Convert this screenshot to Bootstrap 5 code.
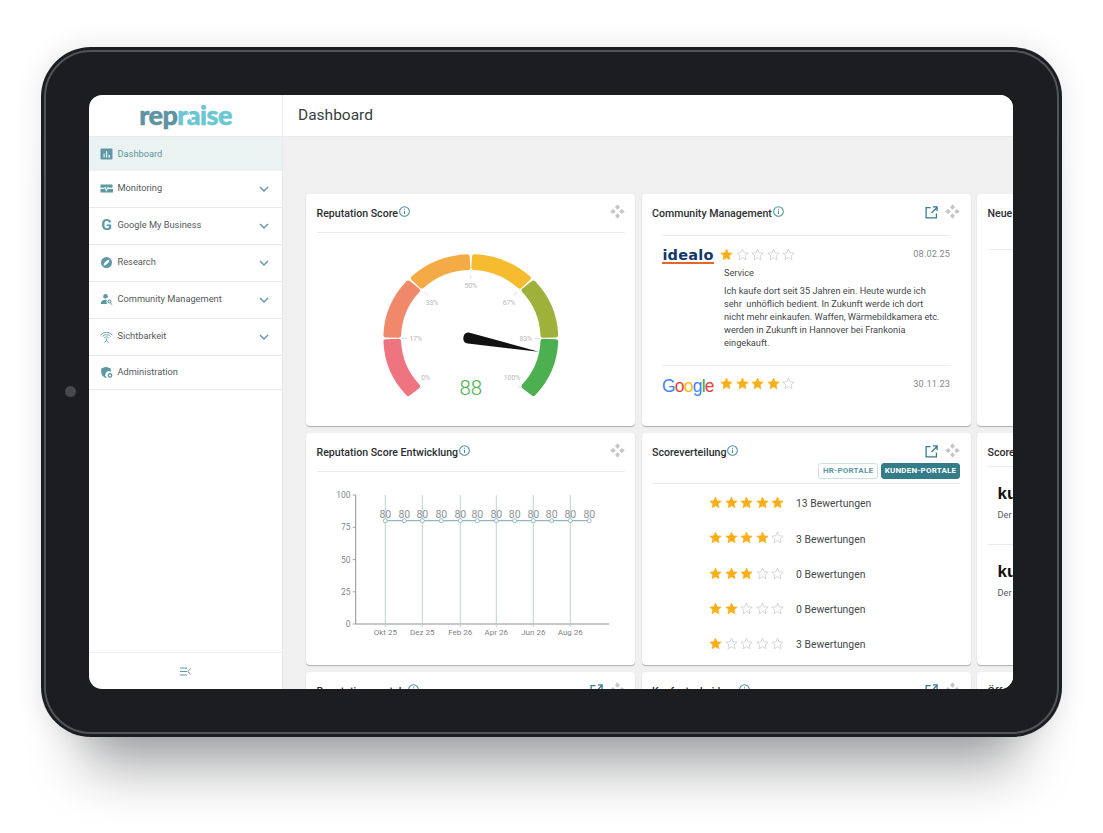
<!DOCTYPE html>
<html lang="de">
<head>
    <meta charset="UTF-8">
    <meta name="viewport" content="width=device-width, initial-scale=1.0">
    <title>Repraise Dashboard</title>
    <link href="https://cdn.jsdelivr.net/npm/bootstrap@5.3.0/dist/css/bootstrap.min.css" rel="stylesheet">
    <style>
        html, body { height: 100%; }
        body { background: #fff; font-family: Roboto, "Liberation Sans", sans-serif; overflow: hidden; color: #3c3f42; }

        /* tablet frame */
        .tablet { position: relative; width: 1021px; height: 690px; margin: 47px 0 0 41px; padding: 3px; background: #1b1d21; border-radius: 50px;
            box-shadow: 0 0 30px rgba(0,0,0,.1), 0 75px 55px -45px rgba(20,24,28,.38); }
        .tablet-ring { height: 100%; padding: 43px 44px 43px 43px; border: 2px solid #50555a; border-radius: 47px; }
        .tablet-dot { position: absolute; left: 24px; top: 339px; width: 11px; height: 11px; border-radius: 50%; background: #46494d; }
        .screen { height: 100%; background: #fff; border-radius: 13px; overflow: hidden; }

        /* sidebar */
        .side { width: 194px; flex: none; border-right: 1px solid #e8ebeb; }
        .side-logo { height: 42px; flex: none; border-bottom: 1px solid #e8ebeb; }
        .brand { position: relative; font-family: Lato, "Open Sans", sans-serif; font-weight: 900; font-size: 27px; line-height: 1; letter-spacing: -.55px; color: #5e93a1; margin-top: -3px; -webkit-text-stroke: .5px currentColor; }
        .brand b { font-weight: 900; color: #6ac6d2; }
        .brand-star { position: absolute; left: 46px; top: 11px; width: 9px; height: 9px; fill: #fff; }
        .side .list-group-item { display: flex; align-items: center; height: 37px; padding: 0 11px 1px 11px; border-color: #e6eaea; font-size: 9.25px; color: #55595c; background: #fff; }
        .side .list-group-item.active { height: 34px; padding-bottom: 0; background: #ebf2f2; color: #5a97a1; border-color: #ebf2f2; margin-top: 0; }
        .side .list-group-item.last-item { height: 34px; border-bottom: 1px solid #e6eaea; }
        .side-lbl { margin-bottom: 2px; }
        .side-ic { width: 13px; height: 13px; flex: none; margin-right: 4.5px; fill: #5d98a4; }
        .g-ic { width: 13px; flex: none; margin-right: 4.5px; font-size: 15.5px; font-weight: 700; line-height: 13px; color: #5d98a4; text-align: center; }
        .chev { width: 10px; height: 6px; margin-left: auto; margin-right: 2px; fill: none; stroke: #5d98a4; stroke-width: 1.4; }
        .side-foot { height: 37px; flex: none; border-top: 1px solid #eff1f1; }

        /* main */
        .top-title { height: 42px; flex: none; padding-left: 15px; font-size: 15.5px; color: #3a3d40; border-bottom: 1px solid #e8ebeb; background: #fff; }
        .main-area { background: #f0f0f0; padding: 57px 0 0 23px; overflow: hidden; min-width: 0; }
        .card-grid { display: grid; grid-template-columns: 329px 329px 329px; grid-auto-rows: 232px; column-gap: 6.5px; row-gap: 7px; width: 1000px; }
        .dash-card { border: 0; border-radius: 4px; box-shadow: 0 1px 1px rgba(0,0,0,.28); overflow: hidden; }
        .card-head { position: relative; display: flex; align-items: flex-start; flex: none; height: 39px; margin: 0 10.5px; padding-top: 13px; border-bottom: 1px solid #e9ecec; }
        .head-plain { height: 41px; border-bottom: 0; }
        .head-tabs { height: 51px; }
        .head-new { height: 56px; }
        .head-score { height: 34px; }
        .card-ttl { font-size: 10.6px; font-weight: 500; line-height: 14px; color: #2b2e31; white-space: nowrap; }
        .info-ic { width: 11px; height: 11px; margin: -1.5px 0 0 1px; fill: none; stroke: #4b8d99; stroke-width: 1.1; }
        .open-ic { width: 13px; height: 13px; margin: -1px 0 0 auto; fill: none; stroke: #357c89; stroke-width: 1.4; }
        .move-ic { width: 15px; height: 15px; margin: -3px 0 0 7px; fill: #c3c5c7; }
        .info-ic + .move-ic { margin-left: auto; }

        /* tabs in Scoreverteilung */
        .tab-row { position: absolute; right: 0; top: 30px; display: flex; gap: 3px; }
        .btn.tab-btn { padding: 0; height: 15.5px; font-size: 8px; font-weight: 700; line-height: 13.5px; letter-spacing: .2px; border-radius: 3px; white-space: nowrap; }
        .btn.tab-off { width: 60px; color: #5d98a4; background: #fff; border: 1px solid #cfdfe2; }
        .btn.tab-on { width: 79px; color: #fff; background: #357c89; border: 1px solid #357c89; }

        /* stars */
        .star-row { display: flex; gap: 2.5px; }
        .star { width: 13px; height: 13px; }
        .star.on { fill: #fbae17; stroke: #fbae17; stroke-width: 1.2; }
        .star.off { fill: none; stroke: #c6c8ca; stroke-width: 1.3; }

        /* community */
        .review-list { margin: 0 20.5px; border-top: 1px solid #e9ecec; }
        .review-top { display: flex; align-items: center; height: 18px; margin-top: 9px; }
        .logo-box { width: 52px; margin-right: 6px; flex: none; }
        .review-date { margin-left: auto; font-size: 9.2px; letter-spacing: .1px; color: #85888b; }
        .idealo { font-family: "DejaVu Sans", sans-serif; font-size: 14.5px; font-weight: 700; line-height: 18px; letter-spacing: .2px; color: #12376a; border-bottom: 2px solid #e4662a; text-align: center; height: 18px; margin-top: 1px; }
        .gg { font-family: "Liberation Sans", sans-serif; font-size: 17.5px; line-height: 18px; letter-spacing: -.8px; white-space: nowrap; padding-top: 4px; }
        .review-text { margin: 3px 0 0 62px; font-size: 9.2px; line-height: 13px; color: #45484b; }
        .review-text p { margin: 0 0 5px; white-space: nowrap; }
        .review-sep { border-top: 1px solid #e9ecec; margin-top: 15.5px; }

        /* score distribution */
        .score-list { margin-top: 1px; }
        .score-row { display: flex; align-items: center; height: 35.25px; padding-left: 67.7px; }
        .score-txt { margin-left: 11.8px; font-size: 10.4px; color: #45484b; padding-top: 3px; }

        /* clipped third column */
        .ku-list { margin: 0 10.5px; }
        .ku-item { height: 78px; padding: 18px 0 0 10px; border-bottom: 1px solid #e9ecec; }
        .ku-item:last-child { border: 0; }
        .ku-logo { font-family: "Liberation Sans", sans-serif; font-weight: 700; font-size: 17px; line-height: 17px; color: #111; }
        .ku-txt { margin-top: 6px; font-size: 9.2px; color: #55585b; white-space: nowrap; }
        .chart-txt { font-family: Roboto, "Liberation Sans", sans-serif; }
        svg { display: block; flex: none; }
    </style>
</head>
<body>
    <svg width="0" height="0" class="position-absolute">
        <defs>
            <symbol id="star" viewBox="0 0 24 24"><path d="M12 2l3 6.900 7.500.7-5.700 4.900 1.700 7.300L12 17.900l-6.500 3.900 1.700-7.300L1.500 9.600 9 8.900z"/></symbol>
            <symbol id="info" viewBox="0 0 12 12"><circle cx="6" cy="6" r="5.300"/><path d="M6 5.200v3.500M6 3.100v1.100"/></symbol>
            <symbol id="open" viewBox="0 0 14 14"><path d="M6 1.700H1.200v11.100h11.100V8M7 7.500l5.800-5.800M8.500 1h4.500v4.500"/></symbol>
            <symbol id="move" viewBox="0 0 15 15"><path d="M7.500.2L10 3.200 7.500 5.700 5 3.200zM7.500 9.300l2.500 2.500-2.500 3-2.500-3zM.2 7.500l3-2.500 2.500 2.500-2.500 2.500zM9.300 7.500l2.500-2.500 3 2.500-3 2.500z"/></symbol>
            <symbol id="chev" viewBox="0 0 10 6"><path d="M1 1l4 4 4-4"/></symbol>
        </defs>
    </svg>

    <div class="tablet">
        <div class="tablet-dot"></div>
        <div class="tablet-ring">
            <div class="screen d-flex">
                <!-- Sidebar -->
                <aside class="side d-flex flex-column">
                    <div class="side-logo d-flex align-items-center justify-content-center">
                        <div class="brand">rep<b>raise</b><svg class="brand-star"><use href="#star"/></svg></div>
                    </div>
                    <div class="list-group list-group-flush">
                        <div class="list-group-item active">
                            <svg class="side-ic" viewBox="0 0 13 13"><path fill-rule="evenodd" d="M2 1.500h9.500a1 1 0 0 1 1 1v9a1 1 0 0 1-1 1H1.500a1 1 0 0 1-1-1v-9a1 1 0 0 1 1-1zM3.500 6.500v4h1.200v-4zM6 4v6.500h1.200V4zM8.500 8v2.500h1.500V8z"/></svg>
                            Dashboard
                        </div>
                        <div class="list-group-item">
                            <svg class="side-ic" viewBox="0 0 13 13"><path d="M.5 2.500h12v3.300H8.800l-.8-1.500-1.500 3-1.300-3-.8 1.500H.5zM.5 7h3.200l.9-1 1.700 3.700 1.800-3.500.4.800h4.500v3.500H.5z"/></svg>
                            <span class="side-lbl">Monitoring</span>
                            <svg class="chev"><use href="#chev"/></svg>
                        </div>
                        <div class="list-group-item">
                            <span class="g-ic">G</span>
                            <span class="side-lbl">Google My Business</span>
                            <svg class="chev"><use href="#chev"/></svg>
                        </div>
                        <div class="list-group-item">
                            <svg class="side-ic" viewBox="0 0 13 13"><path fill-rule="evenodd" d="M6.500 1a5.500 5.500 0 1 1 0 11 5.500 5.500 0 0 1 0-11zM3.500 9.500C6.500 9.500 9 7 9.500 3.500 6.500 4 4 6.500 3.500 9.500z"/></svg>
                            <span class="side-lbl">Research</span>
                            <svg class="chev"><use href="#chev"/></svg>
                        </div>
                        <div class="list-group-item">
                            <svg class="side-ic" viewBox="0 0 13 13"><circle cx="5.500" cy="3.200" r="2.300"/><path d="M.8 11c0-2.800 2-4.300 4.700-4.300.6 0 1 .1 1.400.2-.7 1.200-.5 3 .5 4.100zM9.500 6.500a2 2 0 1 1 0 4 2 2 0 0 1 0-4zm0 1a1 1 0 1 0 0 2 1 1 0 0 0 0-2zM11 10l1.500 1.500-.6.600-1.500-1.500z"/></svg>
                            <span class="side-lbl">Community Management</span>
                            <svg class="chev"><use href="#chev"/></svg>
                        </div>
                        <div class="list-group-item">
                            <svg class="side-ic" viewBox="0 0 13 13" fill="none" stroke="#5d98a4" stroke-width=".9"><path fill="none" d="M.6 5a8 8 0 0 1 11.800 0M2.500 6.500a5.300 5.300 0 0 1 8 0M4.300 8a2.900 2.900 0 0 1 4.400 0M6.500 8.500v2M6.500 10.500l-2 2M6.500 10.500l2 2"/></svg>
                            <span class="side-lbl">Sichtbarkeit</span>
                            <svg class="chev"><use href="#chev"/></svg>
                        </div>
                        <div class="list-group-item last-item">
                            <svg class="side-ic" viewBox="0 0 13 13"><path fill-rule="evenodd" d="M6 .8l4.800 1.800v3.200a3.300 3.300 0 0 0-4 5.700l-.8.500C3 11 1.200 9 1.200 5.800V2.600zM10 7a2.400 2.400 0 1 1 0 4.800A2.400 2.400 0 0 1 10 7zm0 1.400a1 1 0 1 0 0 2 1 1 0 0 0 0-2z"/></svg>
                            Administration
                        </div>
                    </div>
                    <div class="side-foot d-flex align-items-center justify-content-center mt-auto">
                        <svg width="11" height="9" viewBox="0 0 11 9" fill="none" stroke="#5d98a4" stroke-width="1"><path d="M0 1h7M0 4.500h7M0 8h7M10.500 1.500L8 4.500l2.500 3"/></svg>
                    </div>
                </aside>

                <!-- Content -->
                <div class="d-flex flex-column flex-grow-1 overflow-hidden">
                    <div class="top-title d-flex align-items-center">Dashboard</div>
                    <div class="main-area flex-grow-1">
                        <div class="card-grid">

                            <div class="card dash-card">
                                <div class="card-head">
                                    <span class="card-ttl">Reputation Score</span>
                                    <svg class="info-ic"><use href="#info"/></svg>
                                    <svg class="move-ic"><use href="#move"/></svg>
                                </div>
                                <svg id="gauge" width="329" height="193" viewBox="306 233 329 193"></svg>
                            </div>

                            <div class="card dash-card">
                                <div class="card-head head-plain">
                                    <span class="card-ttl">Community Management</span>
                                    <svg class="info-ic"><use href="#info"/></svg>
                                    <svg class="open-ic"><use href="#open"/></svg>
                                    <svg class="move-ic"><use href="#move"/></svg>
                                </div>
                                <div class="review-list">
                                    <div class="review-top">
                                        <div class="logo-box"><div class="idealo">idealo</div></div>
                                        <div class="star-row" data-stars="1"></div>
                                        <span class="review-date">08.02.25</span>
                                    </div>
                                    <div class="review-text">
                                        <p>Service</p>
                                        <p>Ich kaufe dort seit 35 Jahren ein. Heute wurde ich<br>sehr&nbsp; unhöflich bedient. In Zukunft werde ich dort<br>nicht mehr einkaufen. Waffen, Wärmebildkamera etc.<br>werden in Zukunft in Hannover bei Frankonia<br>eingekauft.</p>
                                    </div>
                                    <div class="review-sep"></div>
                                    <div class="review-top">
                                        <div class="logo-box gg"><span style="color:#4285f4">G</span><span style="color:#ea4335">o</span><span style="color:#fbbc05">o</span><span style="color:#4285f4">g</span><span style="color:#34a853">l</span><span style="color:#ea4335">e</span></div>
                                        <div class="star-row" data-stars="4"></div>
                                        <span class="review-date">30.11.23</span>
                                    </div>
                                </div>
                            </div>

                            <div class="card dash-card">
                                <div class="card-head head-new"><span class="card-ttl">Neue Bewertungen</span></div>
                            </div>

                            <div class="card dash-card">
                                <div class="card-head">
                                    <span class="card-ttl">Reputation Score Entwicklung</span>
                                    <svg class="info-ic"><use href="#info"/></svg>
                                    <svg class="move-ic"><use href="#move"/></svg>
                                </div>
                                <svg id="chart" width="329" height="193" viewBox="306 472 329 193"></svg>
                            </div>

                            <div class="card dash-card">
                                <div class="card-head head-tabs">
                                    <span class="card-ttl">Scoreverteilung</span>
                                    <svg class="info-ic"><use href="#info"/></svg>
                                    <svg class="open-ic"><use href="#open"/></svg>
                                    <svg class="move-ic"><use href="#move"/></svg>
                                    <div class="tab-row">
                                        <button type="button" class="btn tab-btn tab-off">HR-PORTALE</button>
                                        <button type="button" class="btn tab-btn tab-on">KUNDEN-PORTALE</button>
                                    </div>
                                </div>
                                <div class="score-list" id="scoreList"></div>
                            </div>

                            <div class="card dash-card">
                                <div class="card-head head-score"><span class="card-ttl">Scores</span></div>
                                <div class="ku-list">
                                    <div class="ku-item"><div class="ku-logo">kununu</div><div class="ku-txt">Der Arbeitgeber</div></div>
                                    <div class="ku-item"><div class="ku-logo">kununu</div><div class="ku-txt">Der Arbeitgeber</div></div>
                                </div>
                            </div>

                            <div class="card dash-card">
                                <div class="card-head">
                                    <span class="card-ttl">Reputationsportale</span>
                                    <svg class="info-ic"><use href="#info"/></svg>
                                    <svg class="open-ic"><use href="#open"/></svg>
                                    <svg class="move-ic"><use href="#move"/></svg>
                                </div>
                            </div>
                            <div class="card dash-card">
                                <div class="card-head">
                                    <span class="card-ttl">Kaufentscheidung</span>
                                    <svg class="info-ic"><use href="#info"/></svg>
                                    <svg class="open-ic"><use href="#open"/></svg>
                                    <svg class="move-ic"><use href="#move"/></svg>
                                </div>
                            </div>
                            <div class="card dash-card">
                                <div class="card-head"><span class="card-ttl">Öffnungszeiten</span></div>
                            </div>

                        </div>
                    </div>
                </div>
            </div>
        </div>
    </div>

    <script>
        function starsHtml(count) {
            let html = "";
            for (let i = 0; i < 5; i++) {
                html += `<svg class="star ${i < count ? "on" : "off"}"><use href="#star"/></svg>`;
            }
            return html;
        }

        document.querySelectorAll("[data-stars]").forEach(el => {
            el.innerHTML = starsHtml(parseInt(el.dataset.stars));
        });

        // Scoreverteilung rows
        const scores = [[5, 13], [4, 3], [3, 0], [2, 0], [1, 3]];
        document.getElementById("scoreList").innerHTML = scores.map(s => `
            <div class="score-row">
                <div class="star-row">${starsHtml(s[0])}</div>
                <span class="score-txt">${s[1]} Bewertungen</span>
            </div>`).join("");

        // Gauge, angles in degrees, 0 = right, counted anticlockwise. Slightly flattened ring, as in the design
        const cx = 470.8, cy = 338.3;
        const outer = [85, 81.7], inner = [72.3, 70.8];
        const segments = [
            [225, 180, "#ee7480"], [180, 135, "#f0896a"], [135, 90, "#f4ab45"],
            [90, 45, "#f7bb2f"], [45, 0, "#a0b13b"], [0, -45, "#4caf50"]
        ];
        const pt = (r, a) => {
            const t = a * Math.PI / 180;
            return (cx + r[0] * Math.cos(t)).toFixed(1) + " " + (cy - r[1] * Math.sin(t)).toFixed(1);
        };
        let gauge = "";
        segments.forEach(s => {
            const a1 = s[0] - 2.4, a2 = s[1] + 2.4;
            gauge += `<path d="M${pt(outer, a1)}A${outer[0]} ${outer[1]} 0 0 1 ${pt(outer, a2)}L${pt(inner, a2)}A${inner[0]} ${inner[1]} 0 0 0 ${pt(inner, a1)}Z" fill="${s[2]}" stroke="${s[2]}" stroke-width="5" stroke-linejoin="round"/>`;
        });
        // angle, text, text x, text y, tick outer and inner radius
        const gaugeLabels = [
            [225, "0%", 425.7, 380, 71, 67], [180, "17%", 415.7, 340.6, 69, 64], [135, "33%", 432, 305.3, 65.5, 60.5],
            [90, "50%", 470.7, 288, 63, 60], [45, "67%", 509, 305.3, 65.5, 60.5], [0, "83%", 525.7, 340.6, 69, 64],
            [-45, "100%", 512, 380, 71, 67]
        ];
        gaugeLabels.forEach(l => {
            const a = pt([l[4], l[4]], l[0]).split(" "), b = pt([l[5], l[5]], l[0]).split(" ");
            gauge += `<line x1="${a[0]}" y1="${a[1]}" x2="${b[0]}" y2="${b[1]}" stroke="#ccc" stroke-width=".7"/>`;
            gauge += `<text class="chart-txt" x="${l[2]}" y="${l[3]}" font-size="6.800" fill="#b9b9b9" text-anchor="middle">${l[1]}</text>`;
        });
        gauge += `<path d="M468.800 332.600L538.700 351.700 467.800 343.500A5.500 5.500 0 0 1 468.800 332.600Z" fill="#111"/>`;
        gauge += `<text class="chart-txt" x="470.800" y="394.500" font-size="20.500" font-weight="300" fill="#4caf50" text-anchor="middle">88</text>`;
        document.getElementById("gauge").innerHTML = gauge;

        // Reputation Score Entwicklung
        const xs = [385.3, 404.3, 422.3, 441.3, 460.3, 477.3, 496.3, 514.7, 533.3, 551.7, 570.3, 589.3];
        const months = { 0: "Okt 25", 2: "Dez 25", 4: "Feb 26", 6: "Apr 26", 8: "Jun 26", 10: "Aug 26" };
        const yTicks = [[100, 495], [75, 527.3], [50, 559.6], [25, 591.8], [0, 624]];
        let chart = `<path d="M355.700 495V624H609" fill="none" stroke="#8d9194" stroke-width="1"/>`;
        yTicks.forEach(t => {
            chart += `<line x1="352.700" x2="355.700" y1="${t[1]}" y2="${t[1]}" stroke="#8d9194" stroke-width=".8"/>`;
            chart += `<text class="chart-txt" x="350.500" y="${t[1] + 3}" font-size="8.500" fill="#85888b" text-anchor="end">${t[0]}</text>`;
        });
        xs.forEach((x, i) => {
            if (months[i]) {
                chart += `<line x1="${x}" x2="${x}" y1="495" y2="627" stroke="#b2cdd0" stroke-width=".9"/>`;
                chart += `<text class="chart-txt" x="${x}" y="635" font-size="8" fill="#7f8285" text-anchor="middle">${months[i]}</text>`;
            }
        });
        chart += `<line x1="385.300" x2="589.300" y1="520.700" y2="520.700" stroke="#8fb8be" stroke-width="1.300"/>`;
        xs.forEach(x => {
            chart += `<circle cx="${x}" cy="520.700" r="2" fill="#fff" stroke="#7fadb4" stroke-width=".8"/>`;
            chart += `<text class="chart-txt" x="${x}" y="518" font-size="10.500" fill="#8f9295" text-anchor="middle">80</text>`;
        });
        document.getElementById("chart").innerHTML = chart;
    </script>

    <script src="https://cdn.jsdelivr.net/npm/bootstrap@5.3.0/dist/js/bootstrap.bundle.min.js"></script>
</body>
</html>
